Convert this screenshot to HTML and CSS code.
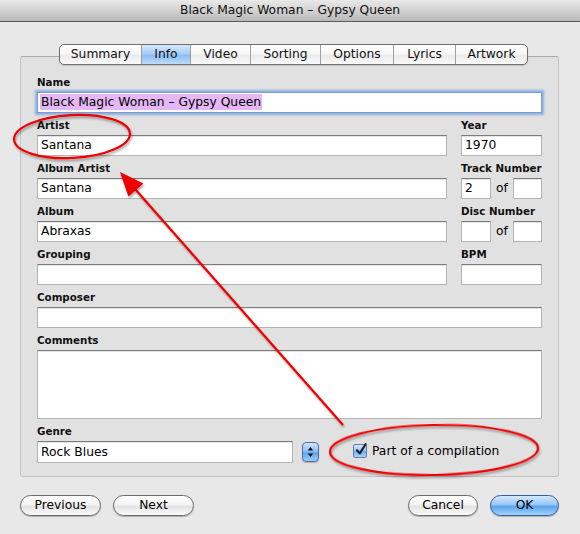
FILE: index.html
```html
<!DOCTYPE html>
<html>
<head>
<meta charset="utf-8">
<link rel="stylesheet" href="styles.css">
</head>
<body>
<div class="window">
  <div class="titlebar">Black Magic Woman – Gypsy Queen</div>
  <div class="content">
    <div class="tabs">
      <div class="tab t-summary">Summary</div>
      <div class="tab t-info selected">Info</div>
      <div class="tab t-video">Video</div>
      <div class="tab t-sorting">Sorting</div>
      <div class="tab t-options">Options</div>
      <div class="tab t-lyrics">Lyrics</div>
      <div class="tab t-artwork">Artwork</div>
    </div>
    <div class="panel">
      <div class="grid">
        <div class="group span2">
          <div class="label">Name</div>
          <div class="field focused"><span class="sel">Black Magic Woman – Gypsy Queen</span></div>
        </div>
        <div class="group">
          <div class="label">Artist</div>
          <div class="field">Santana</div>
        </div>
        <div class="group">
          <div class="label">Year</div>
          <div class="field">1970</div>
        </div>
        <div class="group">
          <div class="label">Album Artist</div>
          <div class="field">Santana</div>
        </div>
        <div class="group">
          <div class="label">Track Number</div>
          <div class="pair">
            <div class="field small">2</div>
            <span class="of">of</span>
            <div class="field small2"></div>
          </div>
        </div>
        <div class="group">
          <div class="label">Album</div>
          <div class="field">Abraxas</div>
        </div>
        <div class="group">
          <div class="label">Disc Number</div>
          <div class="pair">
            <div class="field small"></div>
            <span class="of">of</span>
            <div class="field small2"></div>
          </div>
        </div>
        <div class="group">
          <div class="label">Grouping</div>
          <div class="field"></div>
        </div>
        <div class="group">
          <div class="label">BPM</div>
          <div class="field"></div>
        </div>
        <div class="group span2">
          <div class="label">Composer</div>
          <div class="field"></div>
        </div>
        <div class="group span2">
          <div class="label">Comments</div>
          <div class="field textarea"></div>
        </div>
      </div>
      <div class="genre-row">
        <div class="group genre">
          <div class="label">Genre</div>
          <div class="field">Rock Blues</div>
        </div>
        <div class="stepper">
          <svg width="17" height="20" viewBox="0 0 17 20">
            <polygon points="8.5,5 5.8,8.6 11.2,8.6" fill="#111"/>
            <polygon points="8.5,15 5.8,11.4 11.2,11.4" fill="#111"/>
          </svg>
        </div>
        <div class="check">
          <div class="checkbox">
            <svg width="14" height="14" viewBox="0 0 14 14">
              <path d="M3 7.2 L5.8 10.4 L11.6 1.2" fill="none" stroke="#1a1a2a" stroke-width="2.1" stroke-linecap="round" stroke-linejoin="round"/>
            </svg>
          </div>
          <span class="check-label">Part of a compilation</span>
        </div>
      </div>
    </div>
    <div class="buttons">
      <div class="btn b-prev">Previous</div>
      <div class="btn b-next">Next</div>
      <div class="spacer"></div>
      <div class="btn b-cancel">Cancel</div>
      <div class="btn b-ok default">OK</div>
    </div>
  </div>
  <svg class="annotations" width="580" height="534" viewBox="0 0 580 534">
    <defs>
      <filter id="sh" x="-10%" y="-10%" width="120%" height="130%">
        <feDropShadow dx="1" dy="2" stdDeviation="1.2" flood-color="#000" flood-opacity="0.35"/>
      </filter>
    </defs>
    <g filter="url(#sh)" fill="none" stroke="#ee0000" stroke-width="2.2">
      <ellipse cx="72" cy="136.5" rx="58" ry="21.5" transform="rotate(-3 72 136.5)"/>
      <ellipse cx="434" cy="450" rx="104" ry="25" transform="rotate(-1 434 450)"/>
      <line x1="343" y1="425" x2="135" y2="189"/>
      <polygon points="120,172 143.4,183.4 128.4,196.6" fill="#ee0000" stroke="none"/>
    </g>
  </svg>
</div>
</body>
</html>
```
FILE: styles.css
```css
html, body {
  margin: 0;
  padding: 0;
}
body {
  width: 580px;
  height: 534px;
  background: #e8e8e8;
  font-family: "DejaVu Sans", "Liberation Sans", sans-serif;
  color: #000;
  overflow: hidden;
}
.window {
  position: relative;
  width: 580px;
  height: 534px;
}
.titlebar {
  height: 21px;
  border-bottom: 1px solid #5a5a5a;
  background: linear-gradient(#e9e9e9, #d2d2d2 50%, #b8b8b8);
  text-align: center;
  font-size: 12.3px;
  line-height: 21px;
  color: #111;
}
.content {
  padding-top: 22px;
}
.tabs {
  position: relative;
  z-index: 1;
  display: flex;
  margin-left: 59px;
  width: 469px;
  height: 21px;
  box-sizing: border-box;
  border: 1px solid #6e6e6e;
  border-radius: 5px;
  overflow: hidden;
  box-shadow: 0 1px 1px rgba(0,0,0,0.15);
  background: linear-gradient(#ffffff, #f7f7f7 45%, #ebebeb 55%, #f9f9f9);
}
.tab {
  font-size: 12.3px;
  line-height: 19px;
  text-align: center;
  border-right: 1px solid #a0a0a0;
  color: #111;
}
.tab:last-child { border-right: none; }
.t-summary { width: 81px; }
.t-info { width: 48px; }
.t-video { width: 59px; }
.t-sorting { width: 69px; }
.t-options { width: 72px; }
.t-lyrics { width: 61px; }
.t-artwork { flex: 1; }
.tab.selected {
  background: linear-gradient(#d6e8fc, #a9cdf5 45%, #8dbdf1 55%, #bcdcfa);
}
.panel {
  margin-top: -9px;
  margin-left: 20px;
  width: 539px;
  height: 421px;
  box-sizing: border-box;
  border: 1px solid #c4c4c4;
  border-top-color: #a8a8a8;
  border-radius: 3px;
  background: #e1e1e1;
  padding: 18px 16px 0 16px;
}
.grid {
  display: grid;
  grid-template-columns: 410px 81px;
  column-gap: 14px;
  row-gap: 5px;
}
.span2 { grid-column: 1 / span 2; }
.group {
  display: flex;
  flex-direction: column;
}
.label {
  font-size: 10.3px;
  font-weight: bold;
  line-height: 14px;
  height: 14px;
  margin-bottom: 3px;
  color: #111;
}
.field {
  height: 21px;
  box-sizing: border-box;
  background: #fff;
  border: 1px solid #b4b4b4;
  border-top-color: #7c7c7c;
  box-shadow: inset 0 1px 0 #e4e4e4;
  font-size: 12.3px;
  line-height: 19px;
  padding-left: 3px;
  white-space: nowrap;
  overflow: hidden;
}
.field.focused {
  border-color: #7d9cc6;
  box-shadow: 0 0 0 1px #8fb4e4, 0 0 2px 2px rgba(110,160,225,0.75);
  padding-left: 2px;
}
.sel {
  background: #e6b7f6;
  padding: 1px 1px 1px 1px;
}
.textarea {
  height: 69px;
}
.pair {
  display: flex;
  align-items: center;
}
.field.small { width: 30px; }
.field.small2 { width: 29px; }
.of {
  width: 22px;
  text-align: center;
  font-size: 12.3px;
  line-height: 21px;
}
.genre-row {
  display: flex;
  align-items: flex-end;
  margin-top: 5px;
}
.genre {
  width: 256px;
}
.genre .field { height: 22px; line-height: 20px; }
.stepper {
  margin-left: 9px;
  margin-bottom: 1px;
  width: 17px;
  height: 20px;
  box-sizing: border-box;
  border: 1px solid #4d6fa3;
  border-radius: 4px;
  background: linear-gradient(#cfe4fb, #8ec0f3 45%, #5ea5ec 55%, #9ccdf9);
  box-shadow: 0 1px 1px rgba(0,0,0,0.2);
  display: flex;
  align-items: center;
  justify-content: center;
}
.stepper svg { display: block; margin: -1px; }
.check {
  display: flex;
  align-items: center;
  margin-left: 34px;
  margin-bottom: 4px;
}
.checkbox {
  width: 14px;
  height: 14px;
  box-sizing: border-box;
  border: 1px solid #5a7fb0;
  border-radius: 2px;
  background: linear-gradient(#d5e8fc, #9ac7f4 45%, #6cafef 55%, #a8d3fa);
  position: relative;
}
.checkbox svg {
  position: absolute;
  left: 0;
  top: -2px;
}
.check-label {
  margin-left: 5px;
  font-size: 12.3px;
  line-height: 16px;
}
.buttons {
  display: flex;
  margin: 18px 21px 0 20px;
  height: 21px;
}
.spacer { flex: 1; }
.btn {
  height: 21px;
  box-sizing: border-box;
  border: 1px solid #6a6a6a;
  border-radius: 11px;
  background: linear-gradient(#ffffff, #f4f4f4 45%, #e3e3e3 55%, #fbfbfb);
  box-shadow: 0 1px 1px rgba(0,0,0,0.25);
  font-size: 12.3px;
  line-height: 19px;
  text-align: center;
}
.b-prev { width: 81px; }
.b-next { width: 81px; margin-left: 12px; }
.b-cancel { width: 70px; }
.b-ok { width: 69px; margin-left: 12px; }
.btn.default {
  border-color: #38599a;
  background: linear-gradient(#d4e9fd, #95c6f5 45%, #5aa4ee 55%, #a2d3fb);
}
.annotations {
  position: absolute;
  left: 0;
  top: 0;
  pointer-events: none;
}
```
